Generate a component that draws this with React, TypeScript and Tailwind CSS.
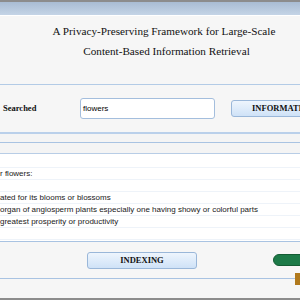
const rows = [
  '',
  'r flowers:',
  '',
  'ated for its blooms or blossoms',
  'organ of angiosperm plants especially one having showy or colorful parts',
  'greatest prosperity or productivity',
  '',
];

export default function App() {
  return (
    <div className="relative w-[300px] h-[300px] overflow-hidden bg-[#f6f6f6]">
      {/* window top */}
      <div className="h-[2px] bg-[#8c8c8c]" />
      <div className="h-[13px] bg-gradient-to-b from-[#a9bcd3] to-[#c4d4e6]" />
      <div className="h-[1px] bg-white" />

      {/* title */}
      <div className="h-[68px] pt-[5px] flex flex-col items-center font-['Liberation_Serif',serif] text-[11.2px] leading-[20px] text-[#111]">
        <div className="pl-[28px]">A Privacy-Preserving Framework for Large-Scale</div>
        <div className="pl-[33px]">Content-Based Information Retrieval</div>
      </div>
      <div className="h-[1px] bg-[#b3cbe6]" />

      {/* search row */}
      <div className="h-[47px] flex items-center">
        <div className="w-[80px] shrink-0 pl-[3px] font-['Liberation_Serif',serif] font-bold text-[8.5px] text-[#111]">Searched</div>
        <div className="w-[135px] h-[21px] shrink-0 flex items-center pl-[2px] bg-white border border-[#a4bedd] rounded-[3px] font-['Liberation_Sans',sans-serif] text-[8px] text-black">
          flowers
        </div>
        <div className="ml-[16px] w-[120px] h-[17px] flex items-center pl-[20px] shrink-0 border border-[#9ab7d9] rounded-[3px] bg-gradient-to-b from-[#eef5fd] to-[#cfe2f7] font-['Liberation_Serif',serif] font-bold text-[8.5px] text-[#111] whitespace-nowrap">
          INFORMATION
        </div>
      </div>

      <div className="h-[2px] bg-[#bad0ea]" />
      <div className="h-[8px] bg-[#f4f4f4]" />
      <div className="h-[1px] bg-[#a9c3e2]" />
      <div className="h-[10px] bg-[#f4f4f4]" />
      <div className="h-[1px] bg-[#b8cde6]" />

      {/* results list */}
      <div className="h-[87px] bg-white pt-[2px] font-['Liberation_Sans',sans-serif] text-[8px] text-[#1a1a1a]">
        {rows.map((r, i) => (
          <div key={i} className="h-[12px] leading-[12px] border-b border-[#eef3f9] whitespace-nowrap">
            {r}
          </div>
        ))}
      </div>
      <div className="h-[1px] bg-[#a9c3e2]" />

      {/* bottom bar */}
      <div className="h-[36px] flex items-center">
        <div className="ml-[87px] w-[110px] h-[17px] shrink-0 flex items-center justify-center border border-[#9ab7d9] rounded-[3px] bg-gradient-to-b from-[#eef5fd] to-[#cfe2f7] font-['Liberation_Serif',serif] font-bold text-[8.5px] text-[#111]">
          INDEXING
        </div>
        <div className="ml-[76px] w-[40px] h-[12px] shrink-0 rounded-full bg-[#1d7a48] border border-[#145c34]" />
      </div>
      <div className="h-[1px] bg-[#a9c3e2]" />
      <div className="h-[19px]" />
      <div className="h-[2px] bg-[#8c8c8c]" />

      {/* small brown marker */}
      <div className="absolute left-[295px] top-[273px] w-[10px] h-[12px] bg-[#b0791c]" />
    </div>
  );
}
